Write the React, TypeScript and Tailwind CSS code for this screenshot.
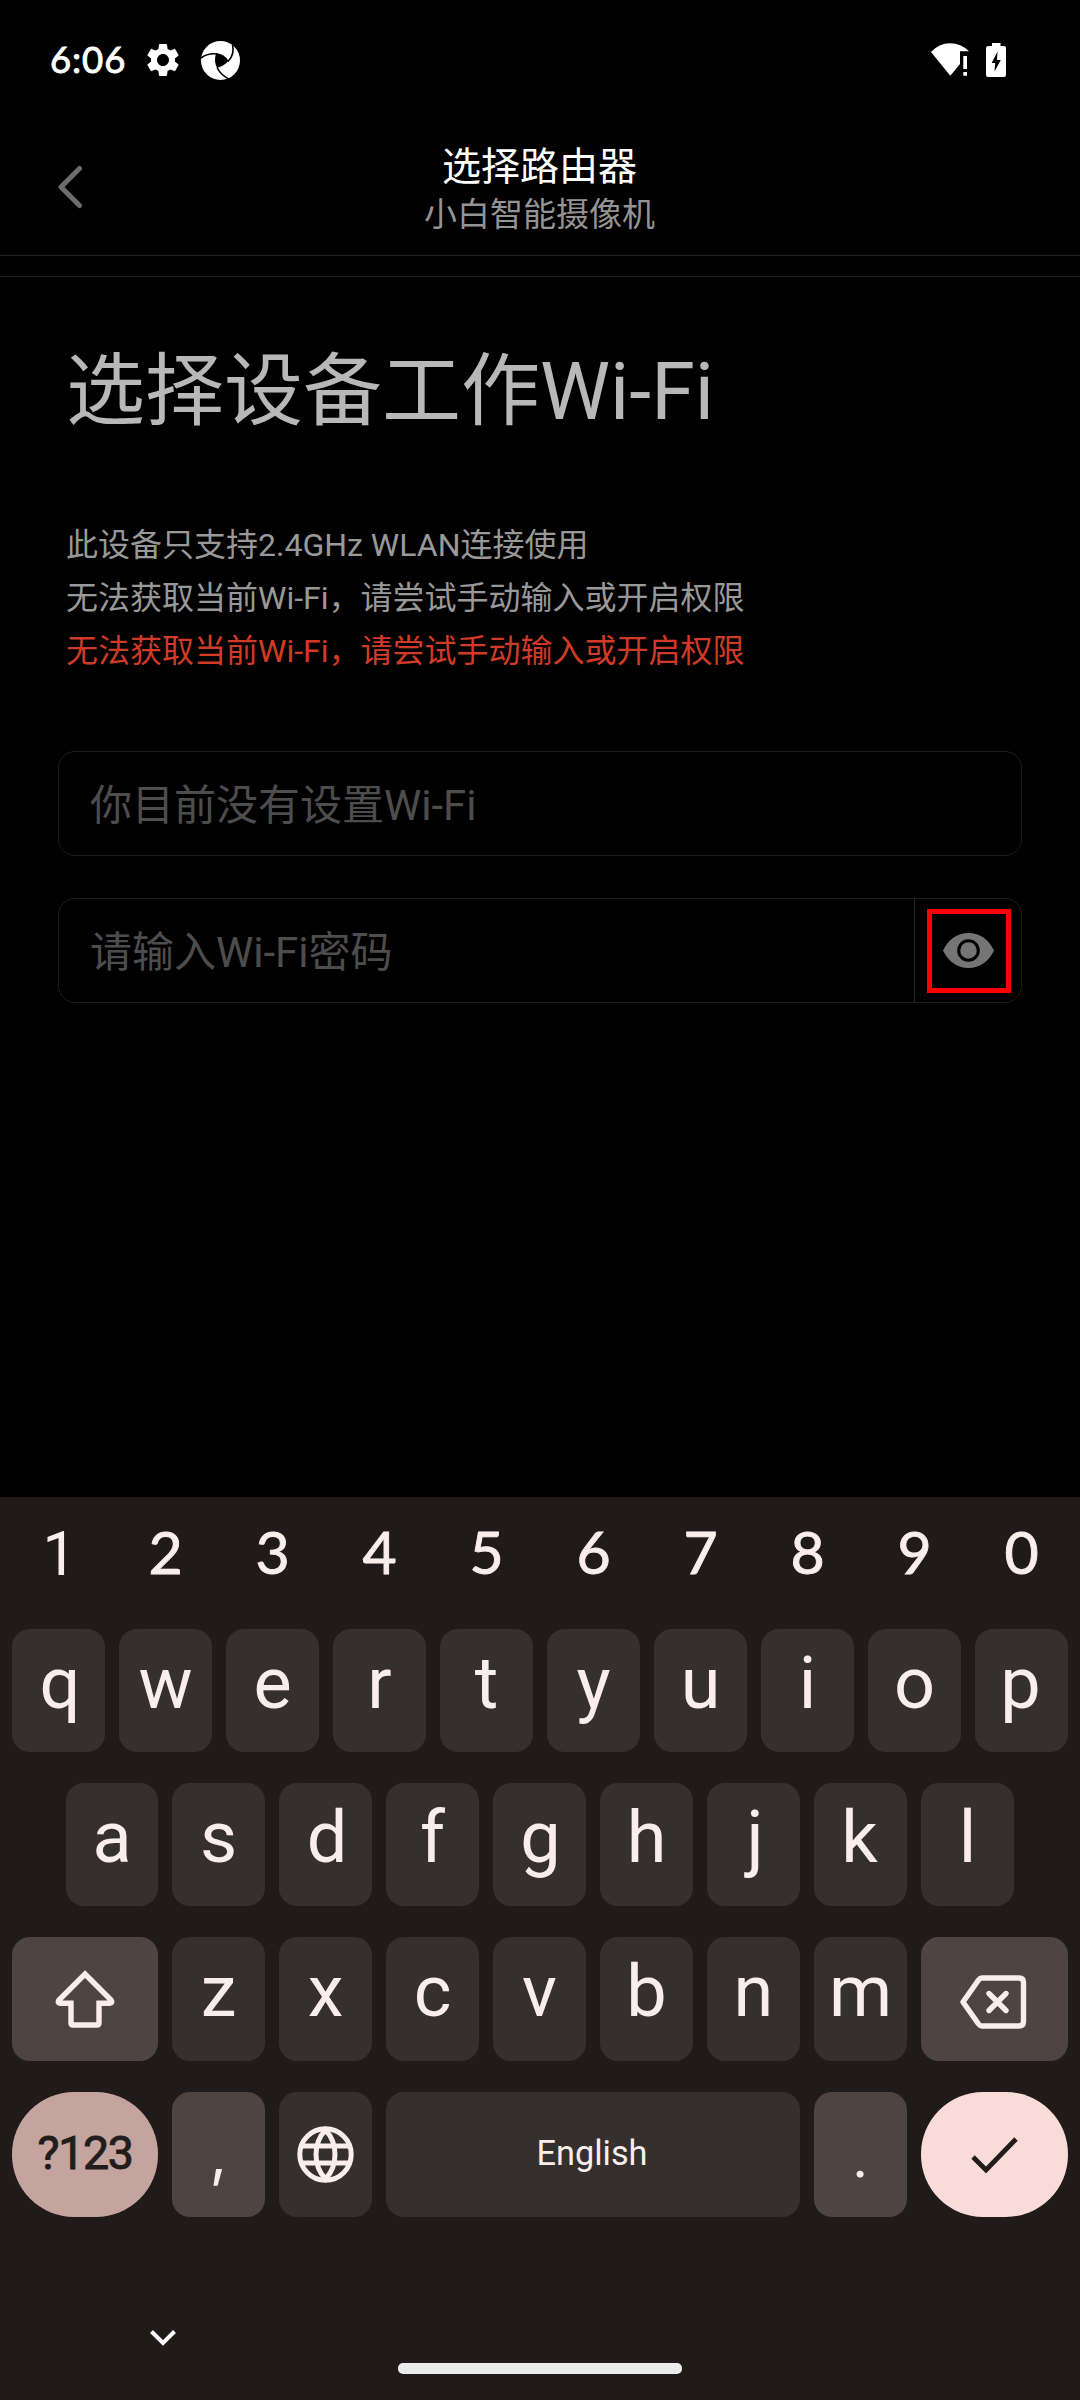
import React from "react";

const ROBOTO = "font-['Roboto','Noto_Sans_CJK_SC',sans-serif]";
const LATO = "font-['Lato',sans-serif]";

function StatusBar() {
  return (
    <div className="flex h-[120px] items-center justify-between pl-[50px] pr-[74px] text-white">
      <div className="flex items-center">
        <span className={`${LATO} relative -top-px w-[97px] text-[36.5px] leading-[40px] tracking-[0.9px] [-webkit-text-stroke:0.9px_white]`}>6:06</span>
        <svg className="size-[40px] -ml-[4px]" viewBox="0 0 24 24" fill="currentColor">
          <path d="M19.14 12.94c.04-.3.06-.61.06-.94 0-.32-.02-.64-.07-.94l2.03-1.58c.18-.14.23-.41.12-.61l-1.92-3.32c-.12-.22-.37-.29-.59-.22l-2.39.96c-.5-.38-1.03-.7-1.62-.94l-.36-2.54c-.04-.24-.24-.41-.48-.41h-3.84c-.24 0-.43.17-.47.41l-.36 2.54c-.59.24-1.13.57-1.62.94l-2.39-.96c-.22-.08-.47 0-.59.22L2.74 8.87c-.12.21-.08.47.12.61l2.03 1.58c-.05.3-.09.63-.09.94s.02.64.07.94l-2.03 1.58c-.18.14-.23.41-.12.61l1.92 3.32c.12.22.37.29.59.22l2.39-.96c.5.38 1.03.7 1.62.94l.36 2.54c.05.24.24.41.48.41h3.84c.24 0 .44-.17.47-.41l.36-2.54c.59-.24 1.13-.56 1.62-.94l2.39.96c.22.08.47 0 .59-.22l1.92-3.32c.12-.22.07-.47-.12-.61l-2.01-1.58zM12 15.6c-1.98 0-3.6-1.62-3.6-3.6s1.62-3.6 3.6-3.6 3.6 1.62 3.6 3.6-1.62 3.6-3.6 3.6z" />
        </svg>
        <svg className="ml-[18px] size-[39px]" viewBox="0 0 39 39" fill="none">
          <circle cx="19.5" cy="19.5" r="19.5" fill="white" />
          <path d="M15 12.500Q23 12 27.500 20Q23 25 16 27Q12.500 20 15 12.500Z" fill="black" />
          <path d="M0 17Q7 11.500 17 13" stroke="black" strokeWidth="1.600" />
          <path d="M31.500 4Q34 13 27 20.500" stroke="black" strokeWidth="1.600" />
          <path d="M16 26.500Q20 34.500 29 38.500" stroke="black" strokeWidth="1.600" />
        </svg>
      </div>
      <div className="flex items-center">
        <svg className="h-[34px] w-[38px]" viewBox="0 0 38 34" fill="white">
          <path d="M0 9Q8 0.200 19 0.200T38 8.300H29V21L19.300 32.700Z" />
          <path d="M32.300 13H36V26H32.300ZM32.300 29H36V32.700H32.300Z" />
        </svg>
        <svg className="ml-[17px] h-[34px] w-[20px]" viewBox="0 0 20 34">
          <path d="M6 0H14.500V3H18Q20 3 20 5V32Q20 34 18 34H2Q0 34 0 32V5Q0 3 2 3H6Z" fill="white" />
          <path d="M11.500 8.500L5.700 20H9.200L8.500 28.500L14.800 17H11Z" fill="black" />
        </svg>
      </div>
    </div>
  );
}

function TitleBar() {
  return (
    <header className="relative h-[136px] border-b border-[#222222] pt-[24px] pr-px text-center">
      <svg className="absolute left-[57px] top-[45px] h-[44px] w-[28px]" viewBox="0 0 28 44" fill="none">
        <path d="M22.500 3.500L4 22L22.500 40.500" stroke="#6c6c6c" strokeWidth="5" strokeLinecap="round" strokeLinejoin="round" />
      </svg>
      <h1 className="text-[39px] leading-[46px] text-white">选择路由器</h1>
      <p className="mt-[5px] text-[33px] leading-[40px] text-[#949494]">小白智能摄像机</p>
    </header>
  );
}

function WifiForm() {
  return (
    <main className="flex-1 border-t border-[#222222]">
      <h2 className="pl-[66px] pt-[69px] text-[79px] leading-[92px] text-[#b8b8b8]">选择设备工作Wi-Fi</h2>
      <div className="mt-[81px] pl-[66px] text-[32px] leading-[53px] text-[#999999]">
        <p>此设备只支持2.4GHz WLAN连接使用</p>
        <p>无法获取当前Wi-Fi，请尝试手动输入或开启权限</p>
        <p className="text-[#d13a27]">无法获取当前Wi-Fi，请尝试手动输入或开启权限</p>
      </div>
      <div className="mx-[58px] mt-[73px] flex flex-col gap-[42px] text-[42px] text-[#4d4d4d]">
        <div className="flex h-[105px] items-center rounded-[17px] border border-[#1c1c1c] pl-[31px] pt-[4px]">你目前没有设置Wi-Fi</div>
        <div className="flex h-[105px] rounded-[17px] border border-[#1c1c1c]">
          <div className="flex w-[855px] items-center pl-[31px] pt-[4px]">请输入Wi-Fi密码</div>
          <div className="flex flex-1 items-start border-l border-[#262626] pl-[12px] pt-[10px]">
            <div className="flex size-[84px] items-center justify-center border-[5px] border-[#ff0000] pr-[2px] pb-px">
              <svg className="h-[35px] w-[51px]" viewBox="0 0 51 35">
                <path d="M0 17.500C5 7 14 0 25.500 0S46 7 51 17.500C46 28 37 35 25.500 35S5 28 0 17.500Z" fill="#757575" />
                <circle cx="25.500" cy="17.500" r="9.800" fill="#757575" stroke="black" strokeWidth="3" />
              </svg>
            </div>
          </div>
        </div>
      </div>
    </main>
  );
}

// Optical centring for letters whose side bearings are uneven.
const NUDGE: Record<string, string> = {
  q: "pl-[3px]",
  d: "pl-[3px]",
  g: "pl-[2px]",
  a: "pl-[1px]",
  j: "pl-[3px]",
  p: "pr-[2px]",
  k: "pr-[2px]",
};

function Key({ children, className = "w-[93px] bg-[#352f2d] pb-[14px]" }: { children: React.ReactNode; className?: string }) {
  return <div className={`flex h-full shrink-0 items-center justify-center rounded-[18px] text-[72px] leading-none ${className}`}>{children}</div>;
}

function LetterKeys({ letters }: { letters: string }) {
  return (
    <>
      {letters.split("").map((k) => (
        <Key key={k}>
          <span className={NUDGE[k]}>{k}</span>
        </Key>
      ))}
    </>
  );
}

function Keyboard() {
  return (
    <section className="h-[903px] bg-[#201a1a] text-[#faeeec]">
      <div className="flex h-[132px] gap-[14px] px-[12px] pt-[11px] leading-[88px]">
        <span className="w-[93px] pt-[3px] pl-[2px] text-center text-[60.5px]">1</span>
        {"234567890".split("").map((d) => (
          <span key={d} className={`${LATO} w-[93px] text-center text-[59px] [-webkit-text-stroke:0.9px_#faeeec]`}>{d}</span>
        ))}
      </div>
      <div className="flex h-[123px] gap-[14px] px-[12px]">
        <LetterKeys letters="qwertyuiop" />
      </div>
      <div className="mt-[31px] flex h-[123px] gap-[14px] pl-[66px]">
        <Key className="w-[92px] bg-[#352f2d] pb-[14px]">a</Key>
        <LetterKeys letters="sdfghjkl" />
      </div>
      <div className="mt-[31px] flex h-[124px] gap-[14px] px-[12px]">
        <Key className="w-[146px] bg-[#4e4442]">
          <svg className="h-[58px] w-[60px]" viewBox="0 0 60 58" fill="none">
            <path d="M30 4L56 30Q58 33 54.500 33.300H44V53Q44 55 42 55H18Q16 55 16 53V33.300H5.500Q2 33 4 30Z" stroke="currentColor" strokeWidth="5.400" />
          </svg>
        </Key>
        <LetterKeys letters="zxcvbnm" />
        <Key className="w-[147px] bg-[#4e4442] pt-[6px] pr-[3px]">
          <svg className="h-[54px] w-[68px]" viewBox="0 0 68 54" fill="none" stroke="currentColor" strokeWidth="5.400">
            <path d="M23 3H60Q64.500 3 64.500 7.500V46.500Q64.500 51 60 51H23Q21 51 19.500 49L4 27L19.500 5Q21 3 23 3Z" strokeLinejoin="round" />
            <path d="M29 18.500L46 35.500M46 18.500L29 35.500" transform="translate(1 0)" strokeLinecap="round" />
          </svg>
        </Key>
      </div>
      <div className="mt-[31px] flex h-[125px] gap-[14px] px-[12px]">
        <Key className="w-[146px] rounded-[62px]! bg-[#c5a39e] pb-[2px] text-[46.5px]! tracking-[-1.4px] text-[#221d1c] [-webkit-text-stroke:1px_#221d1c]">?123</Key>
        <Key className="w-[93px] bg-[#4e4442] pb-[4px] font-['Inter',sans-serif]"><span className="text-[60px]">,</span></Key>
        <Key className="w-[93px] bg-[#352f2d] pr-px">
          <svg className="size-[57px]" viewBox="0 0 57 57" fill="none" stroke="currentColor" strokeWidth="5">
            <circle cx="28.500" cy="28.500" r="25.700" />
            <path d="M4 20H53M4 37H53M28.500 4Q19 14 19 28.500T28.500 53Q38 43 38 28.500T28.500 4Z" />
          </svg>
        </Key>
        <Key className="w-[414px] bg-[#352f2d] pb-[3px] pr-[2px] text-[34.3px]!">English</Key>
        <Key className="w-[93px] bg-[#4e4442] pt-[3px] text-[62px]!">.</Key>
        <Key className="w-[147px] rounded-[62px]! bg-[#f9dcd8] text-[#221d1c]">
          <svg className="h-[36px] w-[47px]" viewBox="0 0 47 36" fill="none">
            <path d="M2 20L15 33L45 2" stroke="currentColor" strokeWidth="4.800" />
          </svg>
        </Key>
      </div>
      <div className="flex flex-col pt-[112px]">
        <svg className="ml-[149px] h-[18px] w-[28px]" viewBox="0 0 28 18" fill="none">
          <path d="M2.500 2.500L14 14L25.500 2.500" stroke="white" strokeWidth="4" />
        </svg>
        <div className="mt-[16px] h-[11px] w-[284px] self-center rounded-[5px] bg-[#ececec]" />
      </div>
    </section>
  );
}

export default function App() {
  return (
    <div className={`${ROBOTO} flex h-[2400px] w-[1080px] flex-col overflow-hidden bg-black`}>
      <StatusBar />
      <TitleBar />
      <div className="h-[20px]" />
      <WifiForm />
      <Keyboard />
    </div>
  );
}
